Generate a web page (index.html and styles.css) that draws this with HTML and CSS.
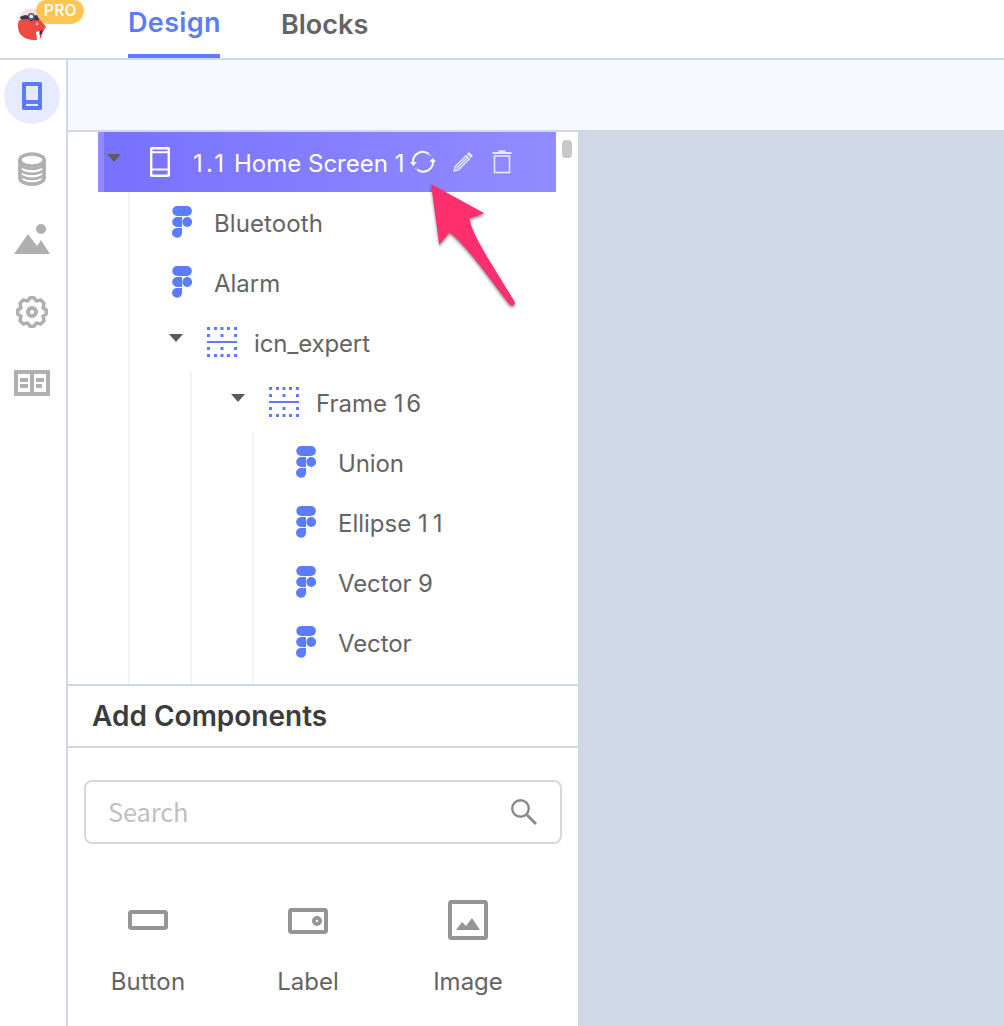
FILE: index.html
```html
<!DOCTYPE html>
<html lang="en">
<head>
<meta charset="utf-8">
<title>Design</title>
<link rel="stylesheet" href="styles.css">
</head>
<body>
<svg class="defs" width="0" height="0" aria-hidden="true">
  <symbol id="figma" viewBox="0 0 20 32">
    <rect x="0.3" y="0" width="19.6" height="10" rx="5"/>
    <path d="M10 11v10H5.2a5 5 0 0 1 0-10z"/>
    <circle cx="15.2" cy="16" r="4.9"/>
    <path d="M10 22v5a5 4.9 0 1 1-4.9-5z"/>
  </symbol>
  <symbol id="arrangement" viewBox="0 0 30 30">
    <path d="M0 0h3v3H0zM7 0h3v3H7zM13.5 0h3v3h-3zM20 0h3v3h-3zM27 0h3v3h-3zM0 7h3v3H0zM13.5 7h3v3h-3zM27 7h3v3h-3zM0 14h30v2H0zM0 20h3v3H0zM13.5 20h3v3h-3zM27 20h3v3h-3zM0 27h3v3H0zM7 27h3v3H7zM13.5 27h3v3h-3zM20 27h3v3h-3zM27 27h3v3h-3z"/>
  </symbol>
</svg>
<div class="app">
  <header class="header">
    <div class="brand">
      <svg class="logo" width="30" height="34" viewBox="0 0 30 34">
        <circle cx="15" cy="16" r="14.500" fill="#f8dddd"/>
        <path d="M2 14C5 11 10 10 16 11c4 0 8 1 9 4l4 5-3 4-2 7-5 2C9 34 1 28 1 20c0-3 0-4 1-6z" fill="#ee4a43"/>
        <path d="M3 10c3-2 6-2 8-1.500L24 8v4l-4 1.500-3-.5-3 1.500-3-2.500-7 .5z" fill="#393455"/>
        <circle cx="14.300" cy="9.500" r="2.600" fill="#fff" stroke="#5b6590" stroke-width="1.600"/>
        <circle cx="20" cy="17" r="1.400" fill="#f9b9ad"/>
        <path d="M19 25l4-1v7l-3 1.500z" fill="#fff"/>
        <path d="M22.500 24l4-1-2 4-2 1z" fill="#393455"/>
      </svg>
      <span class="badge">PRO</span>
    </div>
    <nav class="tabs">
      <a class="tab active"><span class="t-design">Design</span></a>
      <a class="tab"><span>Blocks</span></a>
    </nav>
  </header>
  <div class="body">
    <aside class="rail">
      <div class="rail-item current">
        <svg width="20" height="28" viewBox="0 0 20 28"><path fill="#5c7cfa" fill-rule="evenodd" d="M1 0h18l1 1v26l-1 1H1l-1-1V1zM4 4v14h12V4zM4 22v2h12v-2z"/></svg>
      </div>
      <div class="rail-item database">
        <svg width="28" height="34" viewBox="0 0 28 34" fill="none" stroke="#b0b0b0" stroke-width="3.600"><ellipse cx="14" cy="8" rx="12.100" ry="6"/><path d="M1.900 8v18c0 3.400 5.400 6.100 12.100 6.100s12.100-2.700 12.100-6.100V8"/><path stroke-width="2.700" d="M2 11.500c0 3 5.400 5.300 12 5.300s12-2.300 12-5.300M2 16.500c0 3 5.400 5.300 12 5.300s12-2.300 12-5.300M2 21.500c0 3 5.400 5.300 12 5.300s12-2.300 12-5.300"/></svg>
      </div>
      <div class="rail-item media">
        <svg width="36" height="30" viewBox="0 0 36 30" fill="#b0b0b0"><circle cx="27" cy="5" r="5"/><path d="M0 30 14 10l9 12 4-6 9 14z"/></svg>
      </div>
      <div class="rail-item">
        <svg width="32" height="32" viewBox="-16 -16 32 32" fill="none" stroke="#b0b0b0"><path stroke-width="3.500" stroke-linejoin="round" d="M2-14.200 4.200-11 8.800-12 12-8.800 11-4.200 14.200-2V2L11 4.200 12 8.800 8.800 12 4.200 11 2 14.200H-2L-4.200 11-8.800 12-12 8.800-11 4.200-14.200 2V-2L-11-4.200-12-8.800-8.800-12-4.200-11-2-14.200z"/><circle r="4" stroke-width="4"/></svg>
      </div>
      <div class="rail-item docs">
        <svg width="36" height="26" viewBox="0 0 36 26" fill="#b0b0b0"><path fill-rule="evenodd" d="M0 0h36v26H0zM4 4v18h12V4zM20 4v18h12V4z"/><path d="M6 8h8v4H6zM6 14h8v4H6zM22 8h8v4h-8zM22 14h6v4h-6z"/></svg>
      </div>
    </aside>
    <main class="workspace">
      <div class="toolbar"></div>
      <div class="columns">
        <section class="panel">
          <div class="tree">
            <div class="tree-content">
              <div class="screen-row">
                <svg class="caret" width="14" height="8" viewBox="0 0 14 8"><path d="M0 0h14L7 8z"/></svg>
                <svg class="phone" width="20" height="30" viewBox="0 0 20 30" fill="none" stroke="#fff"><rect x="1.200" y="1.200" width="17.600" height="27.600" rx=".5" stroke-width="2.400"/><path stroke-width="2" d="M1 5.300h18M1 22.500h18"/></svg>
                <span class="label"><span class="number">1.1</span> Home Screen 1</span>
                <svg class="refresh" width="26" height="24" viewBox="0 0 26 24" fill="none" stroke="#fff" stroke-width="2"><path d="M3.200 13a9.600 9.600 0 0 1 14.300-9.800M22.800 10.500a9.600 9.600 0 0 1-14.300 9.800"/><path d="M17.500 3.200q1.700 1 2.800 2.400M8.500 20.300q-1.700-1-2.800-2.400" stroke-dasharray="1.600 1.500"/><path fill="#fff" stroke="none" d="M0 12h6.600l-3.100 4.200zM19.400 11.700 22.700 8l3.300 3.700z"/></svg>
                <svg class="pencil" width="20" height="20" viewBox="0 0 20 20" fill="none" stroke="#e9e7ff" stroke-width="1.500"><path d="M1.200 18.800l.8-4L13 3.800l3.200 3.200-11 11zM3.500 16.500 14.500 5.500"/><path fill="#e9e7ff" stroke="none" d="M13.900 2 16 0l4 4-2.100 2.100z"/></svg>
                <svg class="trash" width="20" height="24" viewBox="0 0 20 24" fill="none" stroke="#e9e7ff" stroke-width="1.600"><path stroke-width="2" d="M.5 3h19M6.500 1.300h7"/><rect x="2.500" y="6" width="15" height="16.500"/></svg>
              </div>
              <div class="children">
                <div class="leaf"><svg width="20" height="32"><use href="#figma"/></svg><span class="label t-bluetooth">Bluetooth</span></div>
                <div class="leaf"><svg width="20" height="32"><use href="#figma"/></svg><span class="label">Alarm</span></div>
                <div class="branch"><svg class="caret" width="14" height="8" viewBox="0 0 14 8"><path d="M0 0h14L7 8z"/></svg><svg width="30" height="30"><use href="#arrangement"/></svg><span class="label t-tight">icn_expert</span></div>
                <div class="children">
                  <div class="branch"><svg class="caret" width="14" height="8" viewBox="0 0 14 8"><path d="M0 0h14L7 8z"/></svg><svg width="30" height="30"><use href="#arrangement"/></svg><span class="label">Frame <span class="wide-one">1</span>6</span></div>
                  <div class="children">
                    <div class="leaf"><svg width="20" height="32"><use href="#figma"/></svg><span class="label t-tight">Union</span></div>
                    <div class="leaf"><svg width="20" height="32"><use href="#figma"/></svg><span class="label">Ellipse <span class="eleven">11</span></span></div>
                    <div class="leaf"><svg width="20" height="32"><use href="#figma"/></svg><span class="label t-tight">Vector 9</span></div>
                    <div class="leaf"><svg width="20" height="32"><use href="#figma"/></svg><span class="label t-tight">Vector</span></div>
                  </div>
                </div>
              </div>
            </div>
            <div class="scrollbar"></div>
          </div>
          <h2 class="heading"><span>Add Components</span></h2>
          <div class="library">
            <div class="search">
              <span class="placeholder">Search</span>
              <svg width="26" height="26" viewBox="0 0 26 26" fill="none" stroke="#8a8a8a"><circle cx="9.500" cy="9.500" r="8.300" stroke-width="2.400"/><path stroke-width="2.800" d="M15.300 15.300 25 25"/></svg>
            </div>
            <div class="components">
              <div class="component"><svg width="40" height="40" viewBox="0 0 40 40" fill="none" stroke="#959595" stroke-width="4"><rect x="2" y="12" width="36" height="16" rx="1.500"/></svg><span class="t-button">Button</span></div>
              <div class="component"><svg width="40" height="40" viewBox="0 0 40 40" fill="none" stroke="#959595" stroke-width="4"><rect x="2" y="10" width="36" height="22" rx="1.500"/><circle cx="29" cy="21" r="3.100" stroke-width="3.800"/></svg><span>Label</span></div>
              <div class="component"><svg width="40" height="40" viewBox="0 0 40 40" fill="none" stroke="#959595" stroke-width="4"><rect x="2" y="2" width="36" height="36" rx="1.500"/><path fill="#959595" stroke="none" d="M8 30l6-8 4 4 6-8 8 12z"/></svg><span>Image</span></div>
            </div>
          </div>
        </section>
        <div class="canvas"></div>
      </div>
    </main>
  </div>
  <svg class="pointer" width="100" height="136" viewBox="424 178 100 136"><path fill="#ff2f6e" d="M431 184 484.300 213.300 469.300 218.500C473 237 492 264 514.500 301.500 515.600 305 512.500 307 509.500 304.500 490 279 466 245 449.500 232.500L439.300 244.700Z"/></svg>
</div>
</body>
</html>
```
FILE: styles.css
```css
* { box-sizing: border-box; }

body {
  margin: 0;
  background: #fff;
  color: #646464;
  font-family: Inter, "Liberation Sans", sans-serif;
  font-size: 24px;
}

svg { display: block; flex: none; }
.defs { position: absolute; }
span { white-space: nowrap; }

.app {
  position: relative;
  display: flex;
  flex-direction: column;
  width: 1004px;
  height: 1026px;
  overflow: hidden;
}

.header {
  display: flex;
  flex: none;
  height: 60px;
  border-bottom: 2px solid #d0d7e6;
}

.brand { position: relative; width: 128px; padding: 7px 0 0 17px; }

.badge {
  position: absolute;
  top: 0;
  left: 36px;
  width: 48px;
  height: 24px;
  border-radius: 10px 10px 14px 14px;
  background: #ffc552;
  color: #fff;
  font: 500 16px/19px "Noto Sans CJK SC", sans-serif;
  text-align: center;
}

.tabs { display: flex; gap: 61px; }
.tab { height: 58px; font-size: 27px; font-weight: 600; line-height: 46px; }
.tab + .tab { line-height: 49px; }
.tab.active { width: 92px; border-bottom: 4px solid #5c7cfa; color: #5c7cfa; }
.t-design { letter-spacing: .35px; }

.body { display: flex; flex: 1; min-height: 0; }

.rail {
  display: flex;
  flex-direction: column;
  gap: 16px;
  width: 68px;
  padding: 8px 0 0 4px;
  border-right: 2px solid #d0d7e6;
}

.rail-item {
  display: flex;
  align-items: center;
  justify-content: center;
  width: 56px;
  height: 56px;
  border-radius: 50%;
}
.rail-item.current { background: #e7ebff; }
.rail-item.database { padding-top: 2px; }
.rail-item.media, .rail-item.docs { padding-bottom: 2px; }

.workspace { display: flex; flex: 1; flex-direction: column; }
.toolbar { height: 72px; border-bottom: 2px solid #d0d7e6; background: #f5f8fd; }
.columns { display: flex; flex: 1; min-height: 0; }
.panel { display: flex; flex-direction: column; width: 510px; }
.canvas { flex: 1; background: #d0d7e6; }

.tree { display: flex; height: 552px; overflow: hidden; }
.tree-content { width: 458px; margin-left: 30px; }

.screen-row {
  display: flex;
  align-items: center;
  height: 60px;
  padding-left: 3px;
  border-left: 6px solid #918cff;
  background: linear-gradient(90deg, #7871ff, #918cff);
  color: #fff;
}
.caret { margin-bottom: 9px; fill: #5c5c5c; }
.phone { margin-left: 29px; }
.screen-row .label { width: 217px; margin-left: 23px; }
.number { letter-spacing: 3.3px; }
.wide-one { letter-spacing: 2.6px; }
.eleven { letter-spacing: 5px; }
.pencil { margin-left: 17px; }
.trash { margin-left: 19px; }

.children {
  height: 492px;
  margin-left: 30px;
  border-left: 2px solid #f2f2fa;
}
.children .children { margin-left: 60px; }

.leaf, .branch { display: flex; align-items: center; height: 60px; color: #646464; fill: #5c7cfa; }
.leaf { padding-left: 42px; }
.leaf .label { margin-left: 22px; }
.branch { padding-left: 39px; }
.branch .caret + svg { margin-left: 24px; }
.branch .label { margin-left: 17px; }
.label { padding-top: 4px; line-height: 30px; }
.t-bluetooth { letter-spacing: .1px; }
.t-tight { letter-spacing: -.13px; }

.scrollbar {
  width: 10px;
  height: 18px;
  margin: 8px 0 0 6px;
  border-radius: 4px;
  background: #c8c8c8;
}

.heading {
  height: 64px;
  margin: 0;
  padding-left: 24px;
  border-top: 2px solid #d0d7e6;
  border-bottom: 2px solid #d0d7e6;
  color: #3c3c3c;
  font-size: 28px;
  font-weight: 600;
  line-height: 61px;
}

.search {
  display: flex;
  align-items: center;
  justify-content: space-between;
  width: 478px;
  height: 64px;
  margin: 32px 0 0 16px;
  padding: 0 23px 0 22px;
  border: 2px solid #d8d8d8;
  border-radius: 8px;
}
.placeholder { color: #bfbfbf; font: 25.4px/58px "Noto Sans CJK SC", sans-serif; letter-spacing: -.1px; padding-bottom: 2px; }

.components { display: grid; grid-template-columns: repeat(3, 160px); margin-top: 56px; }
.component { display: flex; flex-direction: column; align-items: center; gap: 27px; line-height: 30px; }
.t-button { letter-spacing: .2px; }

.pointer {
  position: absolute;
  top: 178px;
  left: 424px;
  filter: drop-shadow(0 2px 1.5px rgb(0 0 0 / 45%));
}
```
